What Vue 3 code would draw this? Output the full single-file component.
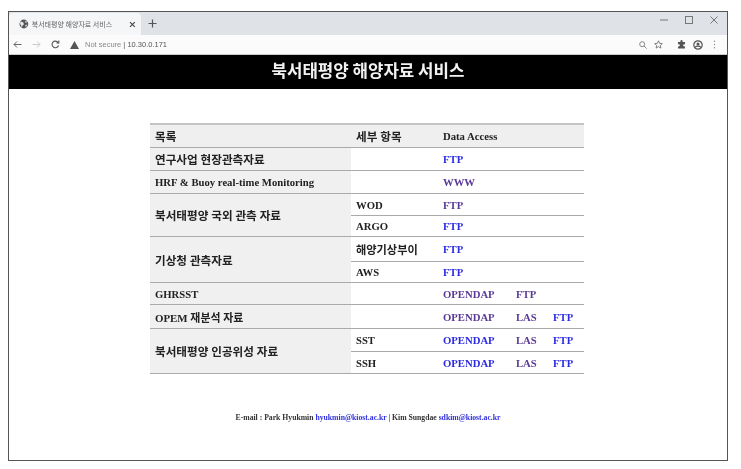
<script setup>
// rows of the service table, h = row height in px
const blue = '#2b2be6'
const purple = '#5a3a96'

const rows = [
  { h: 23, title: '연구사업 현장관측자료', links: [['FTP', blue]] },
  { h: 23, title: 'HRF & Buoy real-time Monitoring', links: [['WWW', purple]] },
  { h: 22, title: '북서태평양 국외 관측 자료', span: 2, sub: 'WOD', links: [['FTP', purple]] },
  { h: 21, sub: 'ARGO', links: [['FTP', blue]] },
  { h: 25, title: '기상청 관측자료', span: 2, sub: '해양기상부이', links: [['FTP', blue]] },
  { h: 21, sub: 'AWS', links: [['FTP', blue]] },
  { h: 22, title: 'GHRSST', links: [['OPENDAP', purple], ['FTP', purple]] },
  { h: 24, title: 'OPEM 재분석 자료', links: [['OPENDAP', purple], ['LAS', purple], ['FTP', blue]] },
  { h: 23, title: '북서태평양 인공위성 자료', span: 2, sub: 'SST', links: [['OPENDAP', blue], ['LAS', purple], ['FTP', blue]] },
  { h: 22, sub: 'SSH', links: [['OPENDAP', blue], ['LAS', purple], ['FTP', blue]] },
]

const isKorean = (text) => /[가-힣]/.test(text || '')
const isMixed = (text) => isKorean(text) && /[A-Z]/.test(text)
</script>

<template>
  <div class="page">
    <div class="window">
      <div class="tabstrip">
        <div class="tab">
          <svg class="globe" width="10" height="10" viewBox="0 0 10 10">
            <circle cx="5" cy="5" r="4.5" fill="#555" />
            <path d="M2 2.5l2.5 1 .5 2-1.5 1-.5 2L2 6.5 1 4zM6 1.5l2.5 1.5-1.5 1zM6.5 6l2-.5-1.500 3z" fill="#e8eaed" />
          </svg>
          <span class="tab-title">북서태평양 해양자료 서비스</span>
          <svg width="7" height="7" viewBox="0 0 7 7"><path d="M1 1l5 5M6 1l-5 5" stroke="#444" stroke-width="1.1" /></svg>
        </div>
        <svg class="plus" width="9" height="9" viewBox="0 0 9 9"><path d="M4.5 .5v8M.5 4.5h8" stroke="#555" stroke-width="1.2" /></svg>
        <div class="win-controls">
          <svg width="8" height="8" viewBox="0 0 8 8"><path d="M0 4h8" stroke="#777" /></svg>
          <svg width="8" height="8" viewBox="0 0 8 8"><rect x=".5" y=".5" width="7" height="7" fill="none" stroke="#777" /></svg>
          <svg width="8" height="8" viewBox="0 0 8 8"><path d="M.5 .5l7 7M7.5 .5l-7 7" stroke="#777" /></svg>
        </div>
      </div>

      <div class="toolbar">
        <svg width="9" height="9" viewBox="0 0 9 9"><path d="M8.5 4.5H1M4 1.5l-3 3 3 3" fill="none" stroke="#666" /></svg>
        <svg width="9" height="9" viewBox="0 0 9 9"><path d="M.5 4.5H8M5 1.5l3 3-3 3" fill="none" stroke="#ccc" /></svg>
        <svg width="9" height="9" viewBox="0 0 9 9"><path d="M7.5 5.5A3.300 3.300 0 1 1 7 2.400M7.800 .6v2.400H5.400" fill="none" stroke="#555" stroke-width="1.1" /></svg>
        <svg width="9" height="8" viewBox="0 0 9 8"><path d="M4.5 0L9 8H0z" fill="#555" /></svg>
        <span class="url"><span class="secure">Not secure</span> | 10.30.0.171</span>
        <div class="tools">
          <svg width="8" height="8" viewBox="0 0 8 8"><circle cx="3.200" cy="3.200" r="2.500" fill="none" stroke="#888" /><path d="M5 5l2.600 2.600" stroke="#888" /></svg>
          <svg width="9" height="9" viewBox="0 0 9 9"><path d="M4.500 .8l1.100 2.500 2.700 .3-2 1.800 .6 2.700-2.400-1.400-2.400 1.400 .6-2.700-2-1.800 2.700-.3z" fill="none" stroke="#666" stroke-width=".8" /></svg>
          <svg class="puzzle" width="9" height="9" viewBox="0 0 9 9"><path d="M3.400 1.200a1.100 1.100 0 0 1 2.200 0V2H8v2.200h-.8a1.100 1.100 0 0 0 0 2.200H8V8.500H1V6.400h.8a1.100 1.100 0 0 0 0-2.200H1V2h2.400z" fill="#555" /></svg>
          <svg width="10" height="10" viewBox="0 0 10 10"><circle cx="5" cy="5" r="4.200" fill="none" stroke="#555" stroke-width="1.200" /><circle cx="5" cy="3.900" r="1.500" fill="#555" /><path d="M2 7.400a3.500 2.600 0 0 1 6 0" fill="none" stroke="#555" stroke-width="1.200" /></svg>
          <svg class="dots" width="3" height="9" viewBox="0 0 3 9"><g fill="#888"><circle cx="1.500" cy="1.200" r=".7" /><circle cx="1.500" cy="4.500" r=".7" /><circle cx="1.500" cy="7.800" r=".7" /></g></svg>
        </div>
      </div>

      <header class="banner">북서태평양 해양자료 서비스</header>

      <main class="content">
        <table class="services">
          <colgroup>
            <col class="c-title" />
            <col class="c-sub" />
            <col class="c-link1" />
            <col class="c-link2" />
            <col class="c-link3" />
          </colgroup>
          <thead>
            <tr>
              <th class="kr">목록</th>
              <th class="kr">세부 항목</th>
              <th colspan="3">Data Access</th>
            </tr>
          </thead>
          <tbody>
            <tr v-for="(row, i) in rows" :key="i" :style="{ height: row.h + 'px' }">
              <td v-if="row.title" class="title" :class="{ kr: isKorean(row.title), mixed: isMixed(row.title) }" :rowspan="row.span || 1">{{ row.title }}</td>
              <td class="sub" :class="{ kr: isKorean(row.sub) }">{{ row.sub }}</td>
              <td v-for="n in 3" :key="n" class="link">
                <a v-if="row.links[n - 1]" href="#" :style="{ color: row.links[n - 1][1] }">{{ row.links[n - 1][0] }}</a>
              </td>
            </tr>
          </tbody>
        </table>

        <p class="mail">
          E-mail : Park Hyukmin <a href="#">hyukmin@kiost.ac.kr</a> | Kim Sungdae <a href="#">sdkim@kiost.ac.kr</a>
        </p>
      </main>
    </div>
  </div>
</template>

<style scoped>
.page {
  width: 741px;
  height: 469px;
  box-sizing: border-box;
  padding: 11px 13px 8px 8px;
  background: #fff;
  overflow: hidden;
  filter: blur(0.6px);
}

.window {
  height: 100%;
  box-sizing: border-box;
  border: 1.5px solid #555;
  display: flex;
  flex-direction: column;
  background: #fff;
  font-family: "Liberation Serif", "Noto Sans CJK KR", serif;
}

.tabstrip {
  height: 23px;
  flex: none;
  display: flex;
  align-items: flex-end;
  background: #dfe2e6;
}

.tab {
  width: 132px;
  height: 22px;
  box-sizing: border-box;
  padding: 0 5px 0 10px;
  display: flex;
  align-items: center;
  gap: 3px;
  background: #f4f6f7;
  border-radius: 4px 4px 0 0;
}

.tab-title {
  width: 97px;
  font: 7px "Noto Sans CJK KR", sans-serif;
  color: #666;
  white-space: nowrap;
}

.plus {
  margin: 0 0 7px 7px;
}

.win-controls {
  margin: 0 0 11px auto;
  padding-right: 9px;
  display: flex;
  gap: 17px;
}

.toolbar {
  height: 19px;
  flex: none;
  display: flex;
  align-items: center;
  gap: 10px;
  padding: 0 11px 0 4px;
  background: #fbfbfc;
  border-bottom: 1px solid #ccc;
}

.url {
  margin-left: -4px;
  font: 7.5px "Liberation Sans", sans-serif;
  color: #555;
}

.secure {
  color: #888;
}

.tools {
  margin-left: auto;
  display: flex;
  align-items: center;
  gap: 7px;
}

.puzzle {
  margin-left: 7px;
}

.dots {
  margin-left: 3px;
}

.banner {
  height: 34px;
  flex: none;
  box-sizing: border-box;
  padding-bottom: 4px;
  display: flex;
  align-items: center;
  justify-content: center;
  background: #000;
  color: #f2f2f2;
  font: 700 16.8px "Noto Sans CJK KR", sans-serif;
}

.content {
  flex: 1;
  padding-top: 34px;
  display: flex;
  flex-direction: column;
  align-items: center;
}

.services {
  width: 434px;
  margin-right: 2px;
  table-layout: fixed;
  border-collapse: collapse;
  border-top: 2px solid #c4c4c4;
  font-size: 10.7px;
  font-weight: 700;
  color: #222;
}

.c-title { width: 201px; }
.c-sub { width: 87px; }
.c-link1 { width: 73px; }
.c-link2 { width: 37px; }
.c-link3 { width: 36px; }

th {
  height: 22px;
  padding: 0 0 0 5px;
  text-align: left;
  background: #efefef;
  border-bottom: 1px solid #aaa;
}

td {
  padding: 0 0 0 5px;
  border-bottom: 1px solid #aaa;
  white-space: nowrap;
}

td.title {
  background: #f0f0f0;
}

th.kr,
td.kr {
  font-size: 11.6px;
}

td.title.mixed {
  font-size: 10.9px;
}

td.sub.kr {
  font-size: 11.2px;
}

a {
  text-decoration: none;
}

.mail {
  margin: 39px 0 0;
  font-size: 7.7px;
  font-weight: 700;
  color: #333;
}

.mail a {
  color: #3030dd;
}
</style>

<style>
html, body {
  margin: 0;
  background: #fff;
}
</style>
